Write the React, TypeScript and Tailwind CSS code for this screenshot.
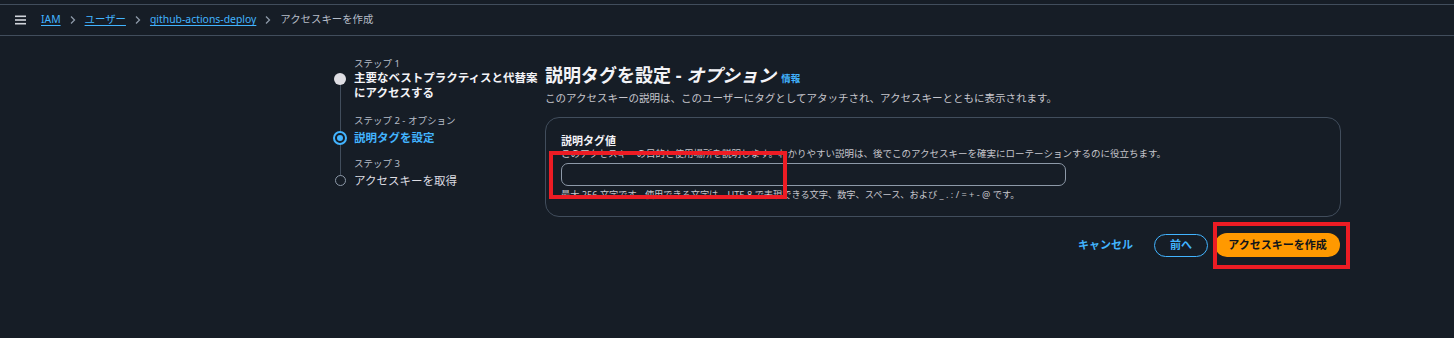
import React from 'react';

const font = { fontFamily: '"Noto Sans", "Noto Sans CJK JP", sans-serif' };

function Chevron() {
  return (
    <svg width="10" height="10" viewBox="0 0 10 10" className="text-[#8d99a8]">
      <path d="M3 1.5 L6.5 5 L3 8.5" fill="none" stroke="currentColor" strokeWidth="1.3" />
    </svg>
  );
}

export default function App() {
  return (
    <div className="relative w-[1454px] h-[338px] bg-[#161d26] overflow-hidden text-[#e9ebed]" style={font}>
      {/* Breadcrumb bar */}
      <div className="h-[4px] bg-[#161d26]" />
      <div className="h-[32px] border-y border-[#414d5c] bg-[#161d26] flex items-center pl-[15px]">
        <svg width="11" height="10" viewBox="0 0 11 10" className="text-[#d1d5db]">
          <rect x="0" y="0.5" width="11" height="1.6" fill="currentColor" />
          <rect x="0" y="4.2" width="11" height="1.6" fill="currentColor" />
          <rect x="0" y="7.9" width="11" height="1.6" fill="currentColor" />
        </svg>
        <div className="flex items-center gap-[7px] ml-[15px] text-[10.4px]">
          <span className="text-[#42b4ff] underline underline-offset-2">IAM</span>
          <Chevron />
          <span className="text-[#42b4ff] underline underline-offset-2">ユーザー</span>
          <Chevron />
          <span className="text-[#42b4ff] underline underline-offset-2">github-actions-deploy</span>
          <Chevron />
          <span className="text-[#b6bec9]">アクセスキーを作成</span>
        </div>
      </div>

      {/* Main */}
      <div className="flex pl-[333px] pt-[21px]">
        {/* Steps */}
        <div className="w-[212px] shrink-0 relative">
          <div className="absolute left-[7px] top-[22px] w-px h-[100px] bg-[#414d5c]" />
          <div className="flex flex-col">
            <div className="pl-[21px] text-[9.5px] text-[#b6bec9] leading-[13px]">ステップ 1</div>
            <div className="flex items-start">
              <div className="w-[14px] flex justify-center pt-[3px] relative">
                <span className="block w-[12px] h-[12px] rounded-full bg-[#dedee3]" />
              </div>
              <div className="pl-[7px] text-[11.5px] font-bold leading-[15px] text-[#f3f3f7]">
                主要なベストプラクティスと代替案<br />にアクセスする
              </div>
            </div>
            <div className="pl-[21px] mt-[14px] text-[9.5px] text-[#b6bec9] leading-[13px]">ステップ 2 - オプション</div>
            <div className="flex items-center mt-[3px]">
              <div className="w-[14px] flex justify-center relative">
                <span className="flex items-center justify-center w-[14px] h-[14px] rounded-full border-[2px] border-[#42b4ff] bg-[#161d26]">
                  <span className="block w-[6px] h-[6px] rounded-full bg-[#42b4ff]" />
                </span>
              </div>
              <div className="pl-[7px] text-[11.5px] font-bold leading-[15px] text-[#42b4ff]">説明タグを設定</div>
            </div>
            <div className="pl-[21px] mt-[12px] text-[9.5px] text-[#b6bec9] leading-[13px]">ステップ 3</div>
            <div className="flex items-center mt-[3px]">
              <div className="w-[14px] flex justify-center relative">
                <span className="block w-[11px] h-[11px] rounded-full border-[1.5px] border-[#8d99a8] bg-[#161d26]" />
              </div>
              <div className="pl-[7px] text-[11.5px] leading-[15px] text-[#dedee3]">アクセスキーを取得</div>
            </div>
          </div>
        </div>

        {/* Content */}
        <div className="w-[796px] shrink-0">
          <div className="flex items-baseline gap-[5px] mt-[5px]">
            <h1 className="text-[18px] font-bold leading-[26px] text-[#f3f3f7]">
              説明タグを設定 - <span className="italic">オプション</span>
            </h1>
            <span className="text-[9.5px] font-bold text-[#42b4ff]">情報</span>
          </div>
          <p className="text-[10.5px] text-[#c6c6cd] leading-[16px] mt-[2px]">
            このアクセスキーの説明は、このユーザーにタグとしてアタッチされ、アクセスキーとともに表示されます。
          </p>

          <div className="mt-[11px] h-[100px] rounded-[14px] border border-[#414d5c] px-[15px] pt-[15px]">
            <div className="text-[11px] font-bold leading-[15px] text-[#f3f3f7]">説明タグ値</div>
            <div className="text-[9.5px] leading-[12px] text-[#c6c6cd]">
              このアクセスキーの目的と使用場所を説明します。わかりやすい説明は、後でこのアクセスキーを確実にローテーションするのに役立ちます。
            </div>
            <div className="mt-[3px] w-[505px] h-[23px] rounded-[7px] border border-[#8d99a8] bg-[#161d26]" />
            <div className="mt-[2px] text-[9.2px] leading-[14px] text-[#c6c6cd]">
              最大 256 文字です。使用できる文字は、UTF-8 で表現できる文字、数字、スペース、および _ . : / = + - @ です。
            </div>
          </div>

          <div className="flex justify-end items-center mt-[16px] pr-[1px]">
            <span className="text-[11px] font-bold text-[#42b4ff] mr-[21px]">キャンセル</span>
            <span className="h-[23px] w-[54px] flex items-center justify-center rounded-full border-[1.5px] border-[#42b4ff] text-[11px] font-bold text-[#42b4ff] mr-[7px]">
              前へ
            </span>
            <span className="h-[24px] w-[125px] flex items-center justify-center rounded-full bg-[#ff9900] text-[11px] font-bold text-[#0f141a]">
              アクセスキーを作成
            </span>
          </div>
        </div>
      </div>

      {/* Annotation boxes */}
      <div className="absolute left-[549px] top-[151px] w-[238px] h-[48px] border-[4px] border-[#ed1c24]" />
      <div className="absolute left-[1213px] top-[222px] w-[137px] h-[47px] border-[4px] border-[#ed1c24]" />
    </div>
  );
}
